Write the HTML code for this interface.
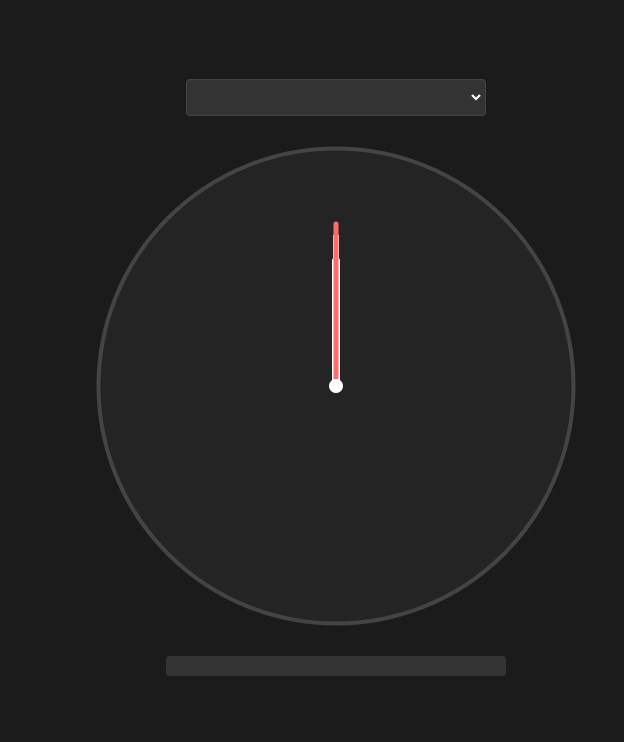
<!DOCTYPE html>
<html><head><style>
html,body{margin:0;width:624px;height:742px;background:#1b1b1b;overflow:hidden}
.sel{position:absolute;left:186px;top:79px;width:298px;height:35px;background:#333;border:1px solid #454545;border-radius:4px}
.bar{position:absolute;left:166px;top:656px;width:340px;height:20px;background:#333;border-radius:3px}
</style></head><body>
<div class="sel"><svg style="position:absolute;right:3px;top:12px" width="12" height="10" viewBox="0 0 12 10"><path d="M2 3 L6 7 L10 3" stroke="#fff" stroke-width="2.2" fill="none"/></svg></div>
<svg style="position:absolute;left:0;top:0" width="624" height="742">
<circle cx="336" cy="386" r="237.5" fill="#242424" stroke="#444" stroke-width="4"/>
<line x1="336" y1="386" x2="336" y2="261" stroke="#fff" stroke-width="8" stroke-linecap="round"/>
<line x1="336" y1="386" x2="336" y2="236" stroke="#fff" stroke-width="6" stroke-linecap="round"/>
<line x1="336" y1="378" x2="336" y2="224" stroke="#ff6b6b" stroke-width="5" stroke-linecap="round"/>
<circle cx="336" cy="386" r="7" fill="#fff"/>
</svg>
<div class="bar"></div>
</body></html>
